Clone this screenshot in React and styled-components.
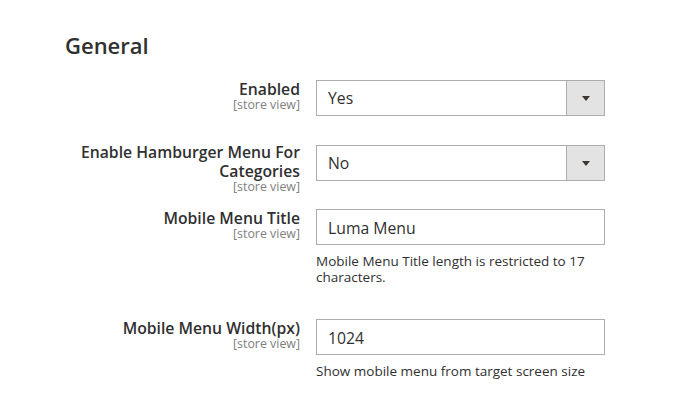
import React from "react";
import styled, { createGlobalStyle } from "styled-components";

const Global = createGlobalStyle`
  html, body { margin: 0; padding: 0; background: #ffffff; }
  body { font-family: "Open Sans", "Liberation Sans", sans-serif; color: #303030; }
  * { box-sizing: border-box; }
`;

const Page = styled.div`
  width: 685px;
  min-height: 420px;
  padding-top: 32px;
`;

const Heading = styled.h2`
  margin: 0 0 22px 65px;
  font-size: 22px;
  line-height: 26px;
  font-weight: 600;
  color: #303030;
`;

const Field = styled.div`
  display: grid;
  grid-template-columns: 300px 289px;
  column-gap: 16px;
  align-items: start;
  margin-bottom: ${(p) => p.$space}px;
`;

const LabelCell = styled.div`
  padding-left: 74px;
  text-align: right;
  margin-top: ${(p) => p.$lift || 0}px;
`;

const LabelText = styled.div`
  font-size: 15.75px;
  line-height: 19px;
  font-weight: 600;
  color: #303030;
`;

const Scope = styled.div`
  font-size: 12.4px;
  line-height: 11px;
  color: #808080;
`;

const Control = styled.div`
  display: flex;
  flex-direction: column;
`;

const SelectBox = styled.div`
  display: flex;
  width: 289px;
  height: 36px;
  border: 1px solid #adadad;
  background: #ffffff;
`;

const SelectValue = styled.div`
  flex: 1;
  padding: 8px 11px 0;
  font-size: 15.75px;
  line-height: 19px;
  color: #303030;
`;

const SelectArrow = styled.div`
  width: 38px;
  border-left: 1px solid #adadad;
  background: #e3e3e3;
  display: flex;
  align-items: center;
  justify-content: center;
  &::after {
    content: "";
    display: block;
    margin-top: 1px;
    border-left: 4px solid transparent;
    border-right: 4px solid transparent;
    border-top: 5px solid #41362f;
  }
`;

const TextInput = styled.input`
  width: 289px;
  height: 36px;
  margin: 0;
  border: 1px solid #adadad;
  border-radius: 0;
  padding: 1px 11px 0;
  font-family: "Open Sans", "Liberation Sans", sans-serif;
  font-size: 15.75px;
  color: #303030;
  background: #ffffff;
  outline: none;
`;

const Note = styled.div`
  margin-top: 8px;
  font-size: 13.5px;
  line-height: 16px;
  color: #303030;
`;

function Label({ text, lift }) {
  return (
    <LabelCell $lift={lift}>
      <LabelText>{text}</LabelText>
      <Scope>[store view]</Scope>
    </LabelCell>
  );
}

function Select({ value }) {
  return (
    <SelectBox>
      <SelectValue>{value}</SelectValue>
      <SelectArrow />
    </SelectBox>
  );
}

export default function App() {
  return (
    <Page>
      <Global />
      <Heading>General</Heading>

      <Field $space={29}>
        <Label text="Enabled" />
        <Control>
          <Select value="Yes" />
        </Control>
      </Field>

      <Field $space={17}>
        <Label text="Enable Hamburger Menu For Categories" lift={-2} />
        <Control>
          <Select value="No" />
        </Control>
      </Field>

      <Field $space={34}>
        <Label text="Mobile Menu Title" />
        <Control>
          <TextInput readOnly value="Luma Menu" />
          <Note>Mobile Menu Title length is restricted to 17 characters.</Note>
        </Control>
      </Field>

      <Field $space={0}>
        <Label text="Mobile Menu Width(px)" />
        <Control>
          <TextInput readOnly value="1024" />
          <Note>Show mobile menu from target screen size</Note>
        </Control>
      </Field>
    </Page>
  );
}
